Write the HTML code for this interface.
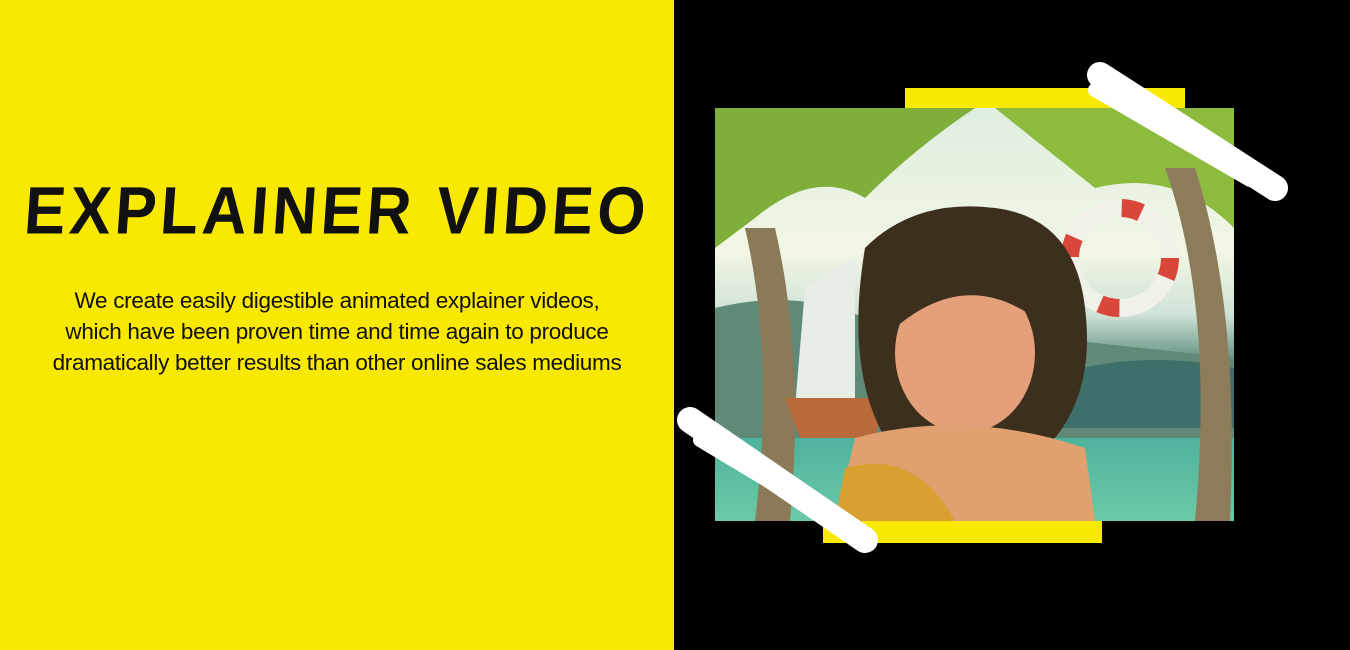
<!DOCTYPE html>
<html><head><meta charset="utf-8"><style>
html,body{margin:0;padding:0;width:1350px;height:650px;overflow:hidden;background:#000}
.left{position:absolute;left:0;top:0;width:674px;height:650px;background:#f9e800}
h1{position:absolute;left:0;width:674px;top:176px;margin:0;text-align:center;font-family:"Liberation Sans",sans-serif;font-weight:900;font-size:62px;letter-spacing:4px;color:#111;transform:skewX(-4deg) scaleY(1.08)}
p{position:absolute;left:0;width:674px;top:285px;margin:0;text-align:center;font-family:"Liberation Sans",sans-serif;font-size:22.5px;line-height:31px;color:#111;letter-spacing:-0.3px}
.bar{position:absolute;background:#f9e800}
.img{position:absolute;left:715px;top:108px;width:519px;height:413px;overflow:hidden;
background:linear-gradient(180deg,#dfeee0 0%,#f2f6e4 35%,#cfe3d6 50%,#5a8a7c 62%,#3fa79a 70%,#6cc9a6 100%)}
</style></head><body>
<div class="left"></div>
<h1>EXPLAINER VIDEO</h1>
<p>We create easily digestible animated explainer videos,<br>which have been proven time and time again to produce<br>dramatically better results than other online sales mediums</p>
<div class="bar" style="left:905px;top:88px;width:280px;height:22px"></div>
<div class="bar" style="left:823px;top:519px;width:279px;height:24px"></div>
<div class="img">
<svg width="519" height="413" viewBox="0 0 519 413">
<path d="M0 200 Q80 180 150 210 L519 250 L519 330 L0 330Z" fill="#5f8a78"/>
<path d="M330 270 Q420 240 519 260 L519 320 L330 320Z" fill="#3f6f6a"/>
<path d="M0 0 L260 0 Q200 40 150 90 Q100 60 40 110 L0 140Z" fill="#7fae3a"/>
<path d="M280 0 L519 0 L519 120 Q460 60 380 80 Q330 40 280 0Z" fill="#8cbb3e"/>
<path d="M30 120 Q60 250 40 413 L75 413 Q90 250 60 120Z" fill="#8a7a58"/>
<path d="M450 60 Q500 200 480 413 L515 413 Q525 200 480 60Z" fill="#8d7c5a"/>
<circle cx="405" cy="150" r="50" fill="none" stroke="#f1f1ea" stroke-width="18"/>
<circle cx="405" cy="150" r="50" fill="none" stroke="#d9473a" stroke-width="18" stroke-dasharray="20 59"/>
<path d="M90 180 L140 150 L140 300 L80 300Z" fill="#e8eee6"/>
<path d="M70 290 L170 290 L160 330 L85 330Z" fill="#b86a3a"/>
<path d="M150 140 Q200 90 280 100 Q360 110 370 200 Q380 280 340 330 L300 340 L170 330 Q130 260 150 140Z" fill="#3d2f1e"/>
<ellipse cx="250" cy="245" rx="70" ry="80" fill="#e3a07a"/>
<path d="M175 180 Q230 120 320 170 L320 210 Q250 160 180 220Z" fill="#3d2f1e"/>
<path d="M140 330 Q250 300 370 340 L380 413 L120 413Z" fill="#e0a070"/>
<path d="M130 360 Q200 340 240 413 L120 413Z" fill="#d8a030"/>
</svg>
</div>
<svg style="position:absolute;left:0;top:0" width="1350" height="650">
<g stroke="#fff" stroke-linecap="round" fill="none">
<path d="M1100 75 L1275 188" stroke-width="26"/>
<path d="M1095 90 L1250 180" stroke-width="14"/>
<path d="M690 420 L865 540" stroke-width="26"/>
<path d="M700 440 L850 530" stroke-width="14"/>
</g></svg>
</body></html>
